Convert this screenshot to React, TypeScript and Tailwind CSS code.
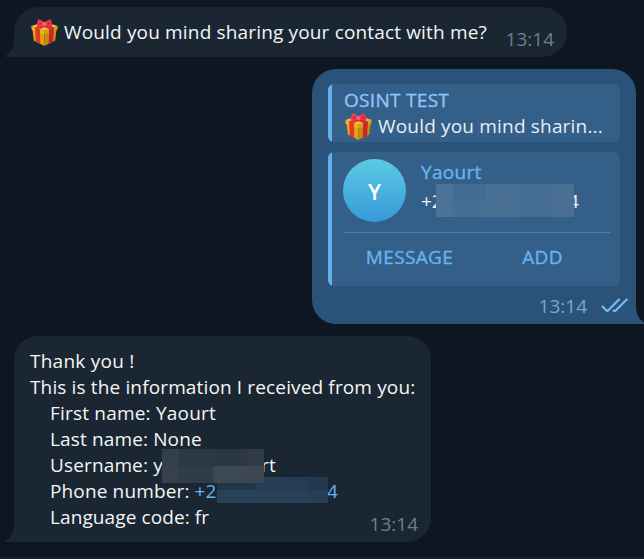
import type { ReactNode } from 'react';

function Gift() {
  return (
    <svg className="ml-px h-[27px] w-[27px] shrink-0" viewBox="0 0 27 27">
      <path d="M1.3 9 L13.5 13 V27 L2.8 21.6 Z" fill="#e5a313" />
      <path d="M25.7 9 L13.5 13 V27 L24.2 21.6 Z" fill="#c98a10" />
      <path d="M0.2 7 L13.5 3 L26.8 7 L13.5 12 Z" fill="#f3c033" />
      <path d="M0.2 7 L13.5 11.8 V15.2 L0.8 11 Z" fill="#efb322" />
      <path d="M26.8 7 L13.5 11.8 V15.2 L26.2 11 Z" fill="#dc9d18" />
      <path d="M4 8.3 L8.8 10 L9.3 24.9 L5 22.7 Z" fill="#e2352f" />
      <path d="M23 8.3 L18.2 10 L17.7 24.9 L22 22.7 Z" fill="#c9262b" />
      <path d="M4 8.3 L16 4 L20 5.6 L8.8 10 Z" fill="#e53438" />
      <path d="M23 8.3 L11 4 L7 5.6 L18.2 10 Z" fill="#d32d33" />
      <path d="M13.5 3.4 C10.8 1 7.6 0 6.9 0.8 C6.2 2.8 6 5 5.8 7.4 C8.5 7.8 11.4 7.2 13.5 5.8 Z" fill="#ea3f49" />
      <path d="M13.5 3.4 C16.2 1 19.4 0 20.1 0.8 C20.8 2.8 21 5 21.2 7.4 C18.5 7.8 15.6 7.2 13.5 5.8 Z" fill="#e53842" />
      <path d="M8.3 3.4 L11.5 4.8 L8 5.8 Z M18.7 3.4 L15.5 4.8 L19 5.8 Z" fill="#c22832" />
      <rect x="11.5" y="3" width="4" height="4" rx="1.3" fill="#f5626a" />
    </svg>
  );
}

function Tail({ side }: { side: 'left' | 'right' }) {
  return side === 'left' ? (
    <svg className="absolute bottom-0 -left-[9px] h-[20px] w-[10px]" viewBox="0 0 10 20">
      <path d="M10 0 H9 V2 C9 10 6 16 0.6 18.4 C-0.2 19 0 20 1 20 H10 Z" fill="#1a2733" />
    </svg>
  ) : (
    <svg className="absolute bottom-0 -right-[9px] h-[20px] w-[10px]" viewBox="0 0 10 20">
      <path d="M0 0 H1 V2 C1 10 4 16 9.4 18.4 C10.2 19 10 20 9 20 H0 Z" fill="#2b5278" />
    </svg>
  );
}

function Card({ className, children }: { className: string; children: ReactNode }) {
  return (
    <div className={`relative overflow-hidden rounded-[6px] bg-[#335f88] ${className}`}>
      <div className="absolute inset-y-0 left-0 w-1 bg-[#61b0ec]" />
      {children}
    </div>
  );
}

function Mask({ className, cells }: { className: string; cells: string[] }) {
  return (
    <span className={`absolute grid ${className}`}>
      {cells.map((c, i) => (
        <span key={i} className={c} />
      ))}
    </span>
  );
}

export default function App() {
  return (
    <div className="flex h-[559px] w-[644px] flex-col overflow-hidden bg-[#0e1621] pt-[7px] font-['Open_Sans','Noto_Sans',sans-serif] text-[19px] leading-[26px] text-[#f5f5f5]">
      <div className="relative ml-[14px] flex h-[50px] w-[553px] rounded-[25px] rounded-bl-none bg-[#1a2733] pl-4">
        <Tail side="left" />
        <div className="mt-3 flex h-[27px] items-start gap-[6px]">
          <Gift />
          <span className="tracking-[0.16px] whitespace-nowrap">Would you mind sharing your contact with me?</span>
        </div>
        <span className="mt-[19px] mr-[13px] ml-auto text-[#6d7f8f]">13:14</span>
      </div>

      <div className="relative mt-3 ml-[312px] flex h-[255px] w-[324px] flex-col rounded-[24px] rounded-br-none bg-[#2b5278] px-4 pt-[15px]">
        <Tail side="right" />
        <Card className="h-[58px] pl-4">
          <div className="mt-[3px] tracking-[0.3px] text-[#8dc5fc] [-webkit-text-stroke:0.35px]">OSINT TEST</div>
          <div className="flex items-start gap-[6px] whitespace-nowrap">
            <Gift />
            <span className="tracking-[0.18px] text-[#e8eef5]">Would you mind sharin...</span>
          </div>
        </Card>
        <Card className="mt-[10px] h-[134px] pr-[10px] pl-[15px]">
          <div className="flex h-[81px] border-b border-[#4381ae]">
            <div className="mt-[7px] flex size-[63px] items-center justify-center rounded-full bg-linear-to-b from-[#5ccae3] to-[#369ad9] text-[22px] font-semibold text-white">
              Y
            </div>
            <div className="relative mt-[7px] ml-[15px] w-[170px]">
              <div className="tracking-[0.3px] text-[#64b5f2] [-webkit-text-stroke:0.35px]">Yaourt</div>
              <div className="mt-[3px] flex">
                <span className="w-[138px]">+2</span>
                <span className="ml-[9px]">4</span>
              </div>
              <Mask
                className="top-[25px] left-[15px] h-[33px] w-[138px] grid-cols-[17px_33px_33px_33px_22px] grid-rows-[17px_16px]"
                cells={['bg-[#4c7298]', 'bg-[#426d93]', 'bg-[#496f94]', 'bg-[#476d95]', 'bg-[#4a7094]', 'bg-[#4c7298]', 'bg-[#486e94]', 'bg-[#4a7094]', 'bg-[#446e94]', 'bg-[#4a6e94]']}
              />
            </div>
          </div>
          <div className="mt-[11px] flex tracking-[0.35px] text-[#64b5f2] [-webkit-text-stroke:0.35px]">
            <span className="w-[133px] text-center">MESSAGE</span>
            <span className="w-[133px] text-center">ADD</span>
          </div>
        </Card>
        <div className="mt-[7px] -mr-[9px] flex items-start justify-end text-[#7fa6cd]">
          <span className="mr-[14px]">13:14</span>
          <svg className="mt-[4px] h-[18px] w-[28px]" viewBox="0 0 28 18" fill="none" stroke="#6dbcf7" strokeWidth="2.2" strokeLinecap="round" strokeLinejoin="round">
            <path d="M1.5 9.5 L6.3 14.2 L18 2.5 M12.5 13.5 L14 14.2 L25.7 2.5" />
          </svg>
        </div>
      </div>

      <div className="relative mt-3 ml-[14px] h-[206px] w-[417px] rounded-[24px] rounded-bl-none bg-[#1a2733] pt-3 pl-4 tracking-[0.14px] whitespace-nowrap">
        <Tail side="left" />
        <div className="tracking-[0.25px]">Thank you !</div>
        <div>This is the information I received from you:</div>
        <div className="pl-5">
          <div className="tracking-[0.2px]">First name: Yaourt</div>
          <div>Last name: None</div>
          <div className="relative flex">
            <span className="w-[211px]">Username: y</span>
            <span>rt</span>
            <Mask
              className="-top-[3px] left-[112px] z-10 h-[34px] w-[102px] grid-cols-[17px_34px_34px_17px] grid-rows-2"
              cells={['bg-[#333f4b]', 'bg-[#2c3944]', 'bg-[#2b3742]', 'bg-[#2f3a45]', 'bg-[#35414d]', 'bg-[#303d49]', 'bg-[#3c4954]', 'bg-[#3c4752]']}
            />
          </div>
          <div className="relative flex">
            <span className="w-[277px]">
              Phone number: <span className="text-[#62b3f3]">+2</span>
            </span>
            <span className="text-[#62b3f3]">4</span>
            <Mask
              className="-top-[1px] left-[167px] h-[26px] w-[111px] grid-cols-[13px_26px_26px_26px_20px] grid-rows-2"
              cells={['bg-[#22364a]', 'bg-[#20364c]', 'bg-[#263f57]', 'bg-[#243d54]', 'bg-[#22394f]', 'bg-[#294159]', 'bg-[#29425c]', 'bg-[#294159]', 'bg-[#28415a]', 'bg-[#263e56]']}
            />
          </div>
          <div className="tracking-[0.1px]">Language code: fr</div>
        </div>
        <span className="absolute right-[13px] bottom-[5px] tracking-normal text-[#6d7f8f]">13:14</span>
      </div>
      <div className="mt-auto h-[2px] bg-[#17212b]" />
    </div>
  );
}
